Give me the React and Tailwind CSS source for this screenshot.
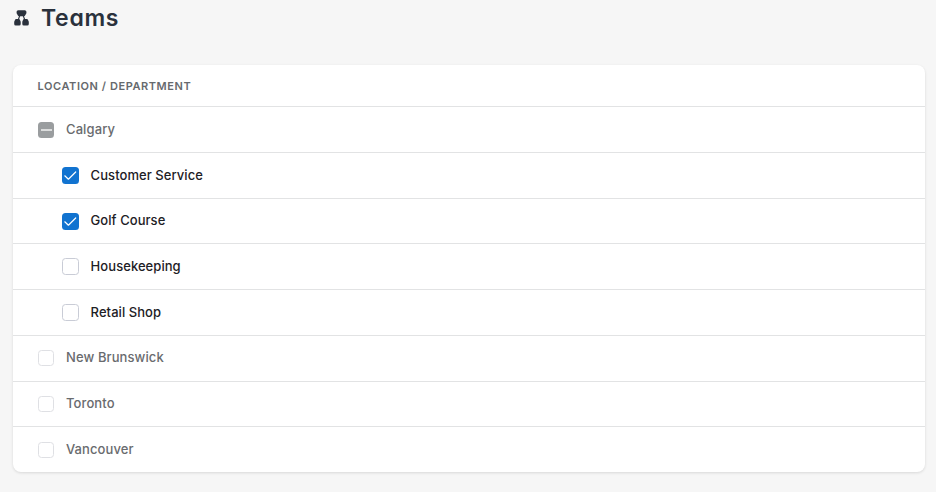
import { useState } from "react";

const initialRows = [
  { id: "calgary", name: "Calgary", state: "mixed" },
  { id: "customer-service", name: "Customer Service", state: "checked", nested: true },
  { id: "golf-course", name: "Golf Course", state: "checked", nested: true },
  { id: "housekeeping", name: "Housekeeping", state: "empty", nested: true },
  { id: "retail-shop", name: "Retail Shop", state: "empty", nested: true },
  { id: "new-brunswick", name: "New Brunswick", state: "empty" },
  { id: "toronto", name: "Toronto", state: "empty" },
  { id: "vancouver", name: "Vancouver", state: "empty" },
];

const TeamsIcon = () => (
  <svg width="15" height="16" viewBox="0 0 15 16" fill="#2a313c" className="shrink-0">
    <path d="M4.2 0.2h6.6a1.6 1.6 0 0 1 1.6 1.6v1.4l-1.3 2.4a1.2 1.2 0 0 1-1 .6H4.9a1.2 1.2 0 0 1-1-.6L2.6 3.2V1.8a1.6 1.6 0 0 1 1.6-1.6z" />
    <path d="M5.8 5.5L4.2 10M9.2 5.5L10.8 10" stroke="#2a313c" strokeWidth="1.1" />
    <path d="M2.1 9h2.8a1 1 0 0 1 .9.6l.9 2.1v2.2a1.5 1.5 0 0 1-1.5 1.5H1.7a1.5 1.5 0 0 1-1.5-1.5v-2.2l1-2.1a1 1 0 0 1 .9-.6z" />
    <path d="M10.1 9h2.8a1 1 0 0 1 .9.6l1 2.1v2.2a1.5 1.5 0 0 1-1.5 1.5H9.8a1.5 1.5 0 0 1-1.5-1.5v-2.2l.9-2.1a1 1 0 0 1 .9-.6z" />
  </svg>
);

const Checkbox = ({ state, label, disabled, onClick }) => {
  let box = disabled ? "border border-[#dfe0e4] bg-white" : "border border-[#c9ccd6] bg-white";
  if (state === "checked") box = "bg-[#1173d0]";
  if (state === "mixed") box = "bg-[#9a9d9f]";

  return (
    <button
      role="checkbox"
      aria-checked={state === "mixed" ? "mixed" : state === "checked"}
      aria-label={label}
      disabled={disabled}
      onClick={onClick}
      className={`${disabled ? "size-4" : "size-[17px]"} shrink-0 rounded-[3.5px] flex items-center justify-center ${box}`}
    >
      {state === "checked" && (
        <svg width="17" height="17" viewBox="0 0 17 17" fill="none" stroke="#fff" strokeWidth="1.2">
          <path d="M2.8 8.8L6.4 12.2L13.7 5" strokeLinecap="round" strokeLinejoin="round" />
        </svg>
      )}
      {state === "mixed" && <span className="w-[11px] h-0.5 bg-[#dcdddd]" />}
    </button>
  );
};

const App = () => {
  const [rows, setRows] = useState(initialRows);

  const toggle = (id) => {
    setRows(
      rows.map((row) =>
        row.id === id ? { ...row, state: row.state === "checked" ? "empty" : "checked" } : row
      )
    );
  };

  return (
    <div className="h-screen bg-[#f6f6f6] overflow-hidden font-['Inter',sans-serif]">
      <div className="flex items-center h-9 pl-3.5 gap-3">
        <TeamsIcon />
        <h1 className="text-[23px] font-semibold text-[#2a313c] tracking-[0.7px] [font-feature-settings:'cv11']">
          Teams
        </h1>
      </div>

      <div className="mt-[29.4px] ml-[13px] mr-[11px] bg-white rounded-lg shadow-[0_1px_3px_rgba(0,0,0,0.12)]">
        <div className="h-[41px] pl-[24.6px] flex items-center text-[11px] font-semibold tracking-[0.57px] text-[#66696d]">
          LOCATION / DEPARTMENT
        </div>
        {rows.map((row) => (
          <div
            key={row.id}
            className={`h-[45.7px] border-t border-[#e2e3e4] flex items-center gap-3 ${row.nested ? "pl-[48.6px]" : "pl-[25px]"}`}
          >
            <Checkbox
              state={row.state}
              label={row.name}
              disabled={!row.nested}
              onClick={() => toggle(row.id)}
            />
            <span
              className={`text-[13px] font-medium ${row.nested ? "tracking-[0.06px] text-[#1d2025]" : "tracking-[0.1px] text-[#696b6e]"}`}
            >
              {row.name}
            </span>
          </div>
        ))}
      </div>
    </div>
  );
};

export default App;
